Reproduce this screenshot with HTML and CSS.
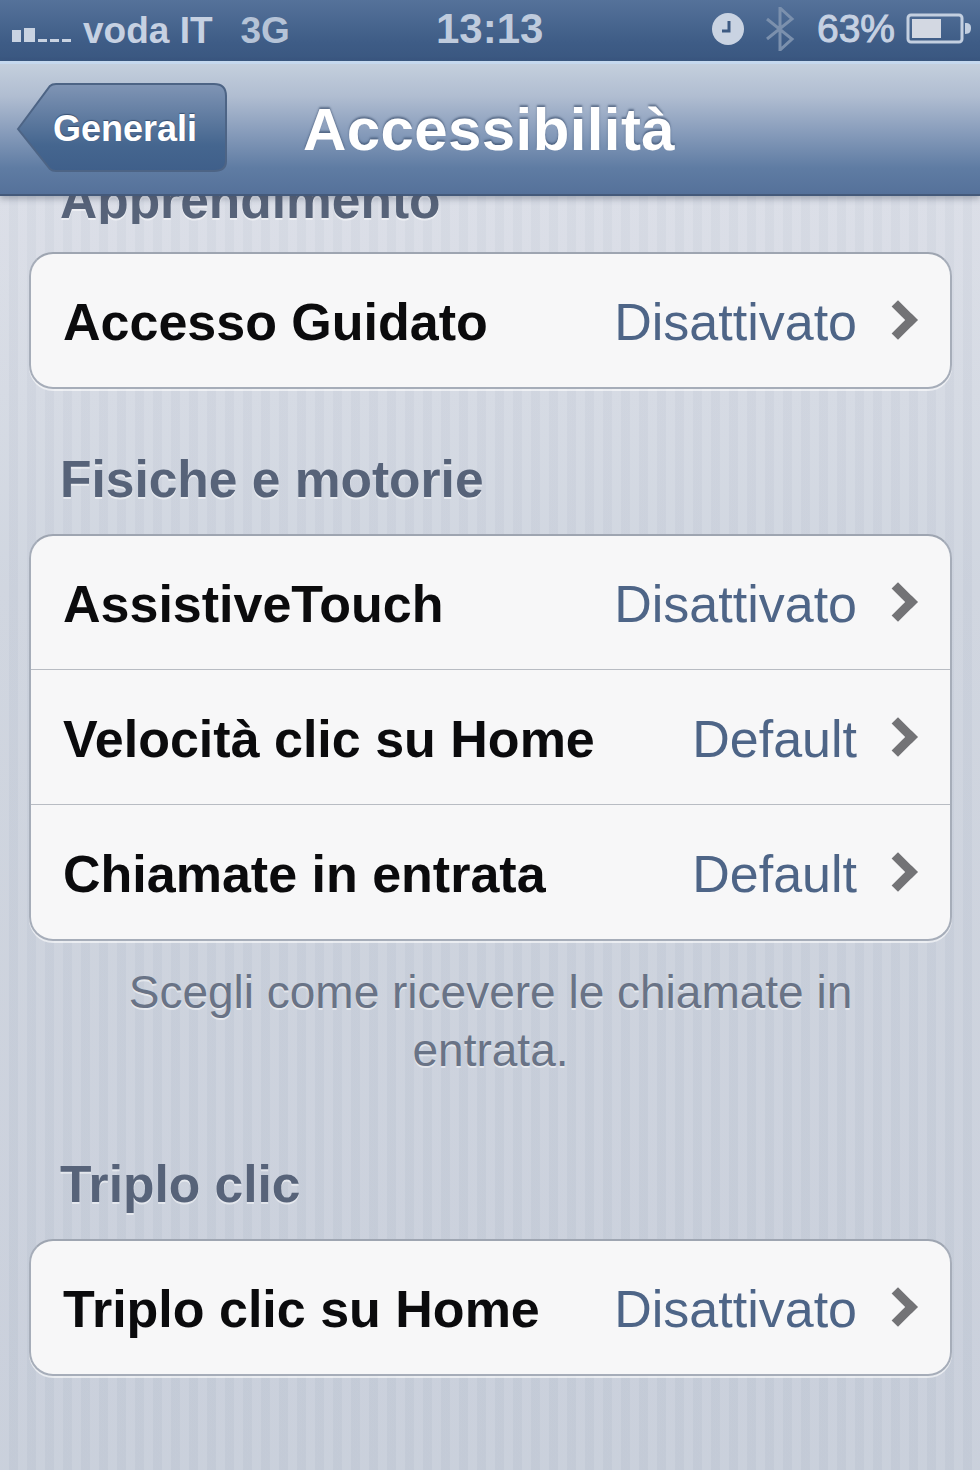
FILE: index.html

```html
<!DOCTYPE html>
<html lang="it">
<head>
    <meta charset="UTF-8">
    <meta name="viewport" content="width=device-width, initial-scale=1.0">
    <title>Accessibilità</title>
    <link rel="stylesheet" href="styles.css">
</head>
<body>
    <div class="status">
        <div class="status-left">
            <svg class="signal" width="60" height="16" viewBox="0 0 60 16">
                <rect x="0" y="4" width="9" height="12" />
                <rect x="12" y="2" width="11" height="14" />
                <rect x="26" y="13" width="9" height="3" />
                <rect x="38" y="13" width="9" height="3" />
                <rect x="50" y="13" width="9" height="3" />
            </svg>
            <span class="carrier">voda IT</span>
            <span class="net">3G</span>
        </div>
        <div class="clock">13:13</div>
        <div class="status-right">
            <svg width="32" height="32" viewBox="0 0 32 32">
                <circle cx="16" cy="16" r="16" fill="#c9d3e2" />
                <path d="M17 8v10h-7" fill="none" stroke="#3d5a82" stroke-width="3" />
            </svg>
            <svg class="bt" width="30" height="44" viewBox="0 0 30 44">
                <path d="M2 12l25 20-12 11V1l12 11L2 32" fill="none" stroke="#7b90ad" stroke-width="3" />
            </svg>
            <span class="percent">63%</span>
            <svg width="66" height="32" viewBox="0 0 66 32">
                <rect x="2" y="2" width="54" height="27" rx="3" fill="none" stroke="#c3cfe0" stroke-width="3" />
                <rect x="6" y="6" width="29" height="19" fill="#d3d8e2" />
                <path d="M59 10c5 0 6 2 6 5s-1 6-6 6z" fill="#c3cfe0" />
            </svg>
        </div>
    </div>

    <div class="navbar">
        <div class="back">
            <svg class="back-shape" width="212" height="92" viewBox="0 0 212 92">
                <defs>
                    <linearGradient id="backFill" x1="0" y1="0" x2="0" y2="1">
                        <stop offset="0" stop-color="#8095b5" />
                        <stop offset="0.7" stop-color="#45668f" />
                        <stop offset="1" stop-color="#3f5f8a" />
                    </linearGradient>
                </defs>
                <path d="M2 46L34 3Q36 1 40 1H198Q210 1 210 13V78Q210 88 198 88H40Q36 88 34 86Z" fill="url(#backFill)" stroke="#4d6485" stroke-width="2" />
            </svg>
            <span class="back-label">Generali</span>
        </div>
        <h1 class="title">Accessibilità</h1>
    </div>

    <div class="content">
        <h2 class="section-title clipped"><span>Apprendimento</span></h2>
        <div class="group">
            <div class="row"><span class="label">Accesso Guidato</span><span class="value">Disattivato</span><span class="chevron"></span></div>
        </div>

        <h2 class="section-title">Fisiche e motorie</h2>
        <div class="group">
            <div class="row"><span class="label">AssistiveTouch</span><span class="value">Disattivato</span><span class="chevron"></span></div>
            <div class="row"><span class="label">Velocità clic su Home</span><span class="value">Default</span><span class="chevron"></span></div>
            <div class="row"><span class="label">Chiamate in entrata</span><span class="value">Default</span><span class="chevron"></span></div>
        </div>
        <p class="note">Scegli come ricevere le chiamate in entrata.</p>

        <h2 class="section-title">Triplo clic</h2>
        <div class="group">
            <div class="row"><span class="label">Triplo clic su Home</span><span class="value">Disattivato</span><span class="chevron"></span></div>
        </div>
    </div>
</body>
</html>
```

FILE: styles.css

```css
html, body { margin: 0; padding: 0; height: 100%; overflow: hidden; }
body {
    font-family: "Liberation Sans", Arial, sans-serif;
    background:
        repeating-linear-gradient(90deg, rgba(255,255,255,0.07) 0 9px, rgba(120,130,150,0.03) 9px 18px),
        linear-gradient(180deg, #dfe2ea 0, #cdd3de 40%, #c6cdd9 100%);
}

.status {
    height: 61px;
    display: flex;
    align-items: center;
    position: relative;
    background: linear-gradient(180deg, #55729a 0, #3e5c86 70%, #3a5780 100%);
    color: #c6d1e2;
    font-size: 37px;
    font-weight: bold;
}
.status-left { display: flex; align-items: center; padding-left: 12px; }
.signal { fill: #c9d3e2; margin-top: 6px; }
.carrier { margin-left: 11px; }
.net { margin-left: 28px; color: #b5c3d7; }
.clock { position: absolute; left: 436px; top: 5px; font-size: 42px; color: #bfcbdd; }
.status-right { margin-left: auto; display: flex; align-items: center; padding: 0 8px 4px 0; }
.bt { margin-left: 21px; }
.percent { margin-left: 22px; margin-right: 11px; font-size: 39px; font-weight: normal; -webkit-text-stroke: 1px #c6d1e2; }

.navbar {
    height: 130px;
    display: flex;
    align-items: center;
    border-top: 3px solid #c5d8ee;
    border-bottom: 2px solid #44597a;
    background: linear-gradient(180deg, #c4cfdd 0, #b0bdd1 25%, #8b9fbd 50%, #5f7ca3 80%, #55719a 100%);
    box-shadow: 0 3px 6px rgba(60,70,90,0.35);
    position: relative;
    z-index: 2;
}
.back {
    position: relative;
    width: 212px;
    height: 92px;
    margin-left: 16px;
    flex: none;
    display: flex;
    align-items: center;
}
.back-shape { position: absolute; left: 0; top: 0; }
.back-label {
    position: relative;
    margin-left: 37px;
    color: #fff;
    font-size: 36px;
    font-weight: bold;
    text-shadow: 0 -1px 1px rgba(30,50,80,0.6);
}
.title {
    margin: 0 0 0 75px;
    color: #fff;
    font-size: 60px;
    letter-spacing: 0.4px;
    font-weight: bold;
    text-shadow: 0 -2px 2px rgba(50,70,100,0.6);
}

.content { padding: 0 28px 0 29px; }
.section-title {
    margin: 0;
    padding-left: 31px;
    color: #576379;
    font-size: 51.5px;
    line-height: 54px;
    font-weight: bold;
    text-shadow: 0 2px 0 rgba(255,255,255,0.5);
}
.clipped { height: 28px; overflow: hidden; position: relative; }
.clipped span { position: relative; top: -23px; }

.group {
    background: #f7f7f8;
    border: 2px solid #a6adb9;
    border-top-color: #9ea5b1;
    border-radius: 24px;
    box-shadow: 0 2px 0 rgba(255,255,255,0.6);
    margin: 28px 0 63px;
}
.row {
    height: 135px;
    display: flex;
    align-items: center;
    padding: 3px 32px 0;
    border-top: 1px solid #b8bcc3;
    box-sizing: border-box;
}
.row:first-child { border-top: 0; height: 133px; }
.label { font-size: 52px; font-weight: bold; color: #0b0b0d; flex: 1; }
.value { font-size: 52px; color: #4e6587; }
.chevron {
    width: 19px;
    height: 19px;
    margin: 0 6px 4px 27px;
    border-top: 9px solid #737376;
    border-right: 9px solid #737376;
    transform: rotate(45deg);
    flex: none;
}

.note {
    margin: -41px 0 0;
    padding: 0 80px;
    text-align: center;
    color: #697386;
    font-size: 46px;
    line-height: 58px;
    text-shadow: 0 2px 0 rgba(255,255,255,0.5);
}
.note + .section-title { margin-top: 78px; }
```
